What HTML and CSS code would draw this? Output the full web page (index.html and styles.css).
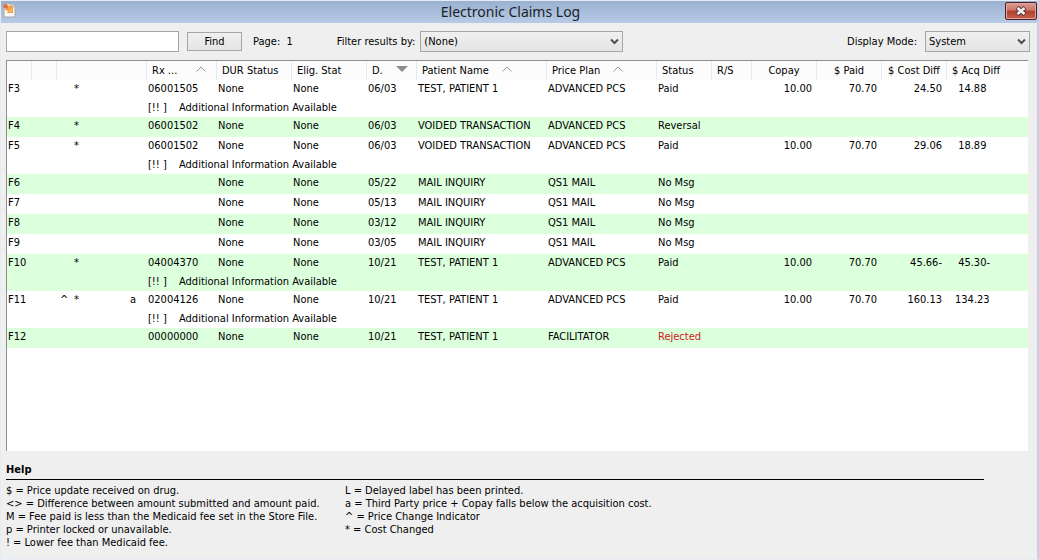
FILE: index.html
```html
<!DOCTYPE html>
<html lang="en">
<head>
<meta charset="utf-8">
<title>Electronic Claims Log</title>
<link rel="stylesheet" href="styles.css">
</head>
<body>
<div class="window">
  <header class="titlebar">
    <svg class="app-icon" width="13" height="15" viewBox="0 0 13 15" aria-hidden="true">
      <path d="M1 1h8l3 3v10H1z" fill="#fbf8f6" stroke="#a9a5a8"/>
      <path d="M9 1v3h3" fill="#e4e0e0" stroke="#b9b4b6"/>
      <path d="M0 2l3-1 2 2 3-1 2 2v6H4l1-2-3-1 1-2z" fill="#f2a04a"/>
      <path d="M0 2l3-1 2 2-1 3-3-1z" fill="#dc6e3c"/>
      <path d="M5 9l4-4v4z" fill="#f6bc55"/>
    </svg>
    <h1 class="title">Electronic Claims Log</h1>
    <button class="close" type="button" aria-label="Close">
      <svg width="12" height="10" viewBox="0 0 12 10" aria-hidden="true">
        <path d="M2 1.500l8 7M10 1.500l-8 7" stroke="#5a3c40" stroke-width="4.500"/>
        <path d="M2.500 2l7 6M9.500 2l-7 6" stroke="#f4f0f0" stroke-width="2.500"/>
      </svg>
    </button>
  </header>

  <form class="toolbar">
    <input class="search" type="text" aria-label="Search claims">
    <button class="find" type="button">Find</button>
    <span class="page">Page:&nbsp; 1</span>
    <label class="filter-label" for="filter">Filter results by:</label>
    <span class="select filter">
      <select id="filter"><option>(None)</option></select>
      <svg width="9" height="7" viewBox="0 0 9 7" aria-hidden="true"><path d="M1 1.500l3.500 3.500L8 1.500" fill="none" stroke="#505050" stroke-width="2"/></svg>
    </span>
    <label class="mode-label" for="mode">Display Mode:</label>
    <span class="select mode">
      <select id="mode"><option>System</option></select>
      <svg width="9" height="7" viewBox="0 0 9 7" aria-hidden="true"><path d="M1 1.500l3.500 3.500L8 1.500" fill="none" stroke="#505050" stroke-width="2"/></svg>
    </span>
  </form>

  <main class="list">
    <table class="claims">
      <colgroup>
        <col class="c-key"><col class="c-blank"><col class="c-flags"><col class="c-rx"><col class="c-dur"><col class="c-dur"><col class="c-date"><col class="c-name"><col class="c-plan"><col class="c-status"><col class="c-rs"><col class="c-money"><col class="c-money"><col class="c-money"><col>
      </colgroup>
      <thead>
        <tr>
          <th></th><th></th><th></th>
          <th>Rx ...<svg class="caret wide" width="10" height="6" viewBox="0 0 10 6"><path d="M.5 5.500L5 1l4.500 4.500" fill="none" stroke="#999"/></svg></th>
          <th>DUR Status</th>
          <th>Elig. Stat</th>
          <th>D.<svg class="caret" width="12" height="6" viewBox="0 0 12 6"><path d="M0 0h12L6 6z" fill="#8c8c8c"/></svg></th>
          <th>Patient Name<svg class="caret" width="10" height="6" viewBox="0 0 10 6"><path d="M.5 5.500L5 1l4.500 4.500" fill="none" stroke="#999"/></svg></th>
          <th>Price Plan<svg class="caret" width="10" height="6" viewBox="0 0 10 6"><path d="M.5 5.500L5 1l4.500 4.500" fill="none" stroke="#999"/></svg></th>
          <th>Status</th>
          <th>R/S</th>
          <th class="mid">Copay</th>
          <th class="mid">$ Paid</th>
          <th class="mid">$ Cost Diff</th>
          <th>$ Acq Diff</th>
        </tr>
      </thead>
      <tbody>
        <tr><td>F3</td><td></td><td><div class="flags"><i></i><i>*</i></div></td><td>06001505</td><td>None</td><td>None</td><td>06/03</td><td>TEST, PATIENT 1</td><td>ADVANCED PCS</td><td>Paid</td><td></td><td class="num">10.00</td><td class="num">70.70</td><td class="num">24.50</td><td class="acq">&nbsp;14.88</td></tr>
        <tr class="note"><td colspan="3"></td><td colspan="12"><span class="mark">[!! ]</span>Additional Information Available</td></tr>
      </tbody>
      <tbody>
        <tr><td>F4</td><td></td><td><div class="flags"><i></i><i>*</i></div></td><td>06001502</td><td>None</td><td>None</td><td>06/03</td><td>VOIDED TRANSACTION</td><td>ADVANCED PCS</td><td>Reversal</td><td></td><td></td><td></td><td></td><td></td></tr>
      </tbody>
      <tbody>
        <tr><td>F5</td><td></td><td><div class="flags"><i></i><i>*</i></div></td><td>06001502</td><td>None</td><td>None</td><td>06/03</td><td>VOIDED TRANSACTION</td><td>ADVANCED PCS</td><td>Paid</td><td></td><td class="num">10.00</td><td class="num">70.70</td><td class="num">29.06</td><td class="acq">&nbsp;18.89</td></tr>
        <tr class="note"><td colspan="3"></td><td colspan="12"><span class="mark">[!! ]</span>Additional Information Available</td></tr>
      </tbody>
      <tbody>
        <tr><td>F6</td><td></td><td></td><td></td><td>None</td><td>None</td><td>05/22</td><td>MAIL INQUIRY</td><td>QS1 MAIL</td><td>No Msg</td><td></td><td></td><td></td><td></td><td></td></tr>
      </tbody>
      <tbody>
        <tr><td>F7</td><td></td><td></td><td></td><td>None</td><td>None</td><td>05/13</td><td>MAIL INQUIRY</td><td>QS1 MAIL</td><td>No Msg</td><td></td><td></td><td></td><td></td><td></td></tr>
      </tbody>
      <tbody>
        <tr><td>F8</td><td></td><td></td><td></td><td>None</td><td>None</td><td>03/12</td><td>MAIL INQUIRY</td><td>QS1 MAIL</td><td>No Msg</td><td></td><td></td><td></td><td></td><td></td></tr>
      </tbody>
      <tbody>
        <tr><td>F9</td><td></td><td></td><td></td><td>None</td><td>None</td><td>03/05</td><td>MAIL INQUIRY</td><td>QS1 MAIL</td><td>No Msg</td><td></td><td></td><td></td><td></td><td></td></tr>
      </tbody>
      <tbody>
        <tr><td>F10</td><td></td><td><div class="flags"><i></i><i>*</i></div></td><td>04004370</td><td>None</td><td>None</td><td>10/21</td><td>TEST, PATIENT 1</td><td>ADVANCED PCS</td><td>Paid</td><td></td><td class="num">10.00</td><td class="num">70.70</td><td class="num">45.66-</td><td class="acq">&nbsp;45.30-</td></tr>
        <tr class="note"><td colspan="3"></td><td colspan="12"><span class="mark">[!! ]</span>Additional Information Available</td></tr>
      </tbody>
      <tbody>
        <tr><td>F11</td><td></td><td><div class="flags"><i>^</i><i>*</i><i></i><i></i><i></i><i>a</i></div></td><td>02004126</td><td>None</td><td>None</td><td>10/21</td><td>TEST, PATIENT 1</td><td>ADVANCED PCS</td><td>Paid</td><td></td><td class="num">10.00</td><td class="num">70.70</td><td class="num">160.13</td><td class="acq">134.23</td></tr>
        <tr class="note"><td colspan="3"></td><td colspan="12"><span class="mark">[!! ]</span>Additional Information Available</td></tr>
      </tbody>
      <tbody>
        <tr><td>F12</td><td></td><td></td><td>00000000</td><td>None</td><td>None</td><td>10/21</td><td>TEST, PATIENT 1</td><td>FACILITATOR</td><td class="rejected">Rejected</td><td></td><td></td><td></td><td></td><td></td></tr>
      </tbody>
    </table>
  </main>

  <section class="help">
    <h2>Help</h2>
    <div class="legend">
      <ul>
        <li>$ = Price update received on drug.</li>
        <li>&lt;&gt; = Difference between amount submitted and amount paid.</li>
        <li>M = Fee paid is less than the Medicaid fee set in the Store File.</li>
        <li>p = Printer locked or unavailable.</li>
        <li>! = Lower fee than Medicaid fee.</li>
      </ul>
      <ul>
        <li>L = Delayed label has been printed.</li>
        <li>a = Third Party price + Copay falls below the acquisition cost.</li>
        <li>^ = Price Change Indicator</li>
        <li>* = Cost Changed</li>
      </ul>
    </div>
  </section>
</div>
</body>
</html>
```
FILE: styles.css
```css
* { box-sizing: border-box; }

body {
  margin: 0;
  background: #efefef;
  color: #000;
  font: 11px/13px Tahoma, "DejaVu Sans Condensed", "DejaVu Sans", sans-serif;
}

.window {
  display: flex;
  flex-direction: column;
  min-height: 100vh;
  border: 1px solid #e4ecf6;
  border-right: 2px solid #c3d2e8;
}

input, button, select { font: inherit; color: inherit; margin: 0; }

.titlebar {
  display: flex;
  align-items: flex-start;
  height: 22px;
  padding: 1px 0 0 2px;
  background: linear-gradient(#9ab0d0, #b7cbe7);
}

.app-icon { margin-top: 1px; }

.title {
  flex: 1;
  margin: 0;
  text-align: center;
  font: 14px/20px "Noto Sans", sans-serif;
  color: #1c1f26;
}

.close {
  display: flex;
  align-items: center;
  justify-content: center;
  width: 32px;
  height: 18px;
  padding: 0;
  border: 1px solid #4c2028;
  border-radius: 2px;
  background: linear-gradient(#dc9c90, #cc7568 45%, #b0402c 50%, #c8604c);
  box-shadow: inset 0 0 0 1px #e0a59c;
}

.toolbar {
  display: flex;
  align-items: center;
  height: 37px;
  padding: 0 7px 0 5px;
}

.search {
  width: 173px;
  height: 21px;
  padding: 0 4px;
  border: 1px solid #a6a6a6;
  background: #fff;
}

.find {
  width: 55px;
  height: 19px;
  margin-left: 8px;
  padding: 0;
  border: 1px solid #a6a6a6;
  background: linear-gradient(#f0f0f0, #e4e4e4);
}

.page { margin-left: 11px; }
.filter-label { margin-left: 44px; }
.mode-label { margin-left: auto; }

.select { position: relative; height: 21px; }
.filter { width: 203px; margin-left: 5px; }
.mode { width: 105px; margin-left: 8px; }

.select select {
  width: 100%;
  height: 100%;
  padding: 0 16px 0 3px;
  border: 1px solid #a6a6a6;
  border-radius: 0;
  appearance: none;
  background: linear-gradient(#f0f0f0, #e4e4e4);
}

.select svg {
  position: absolute;
  right: 4px;
  top: 7px;
  pointer-events: none;
}

.list {
  flex: 1;
  margin: 0 9px 0 5px;
  border-top: 1px solid #8e8e8e;
  border-left: 1px solid #8e8e8e;
  background: #fff;
}

.claims {
  width: 100%;
  table-layout: fixed;
  border-collapse: separate;
  border-spacing: 0;
}

.c-key, .c-blank { width: 25px; }
.c-flags { width: 90px; }
.c-rx { width: 70px; }
.c-dur { width: 75px; }
.c-date { width: 50px; }
.c-name { width: 130px; }
.c-plan { width: 110px; }
.c-status { width: 55px; }
.c-rs { width: 40px; }
.c-money { width: 65px; }

.claims th {
  height: 19px;
  padding: 0 0 0 5px;
  border-right: 1px solid #e3ebf6;
  background: #fcfcfc;
  font-weight: normal;
  text-align: left;
  white-space: nowrap;
}

.claims th:last-child { border-right: 0; }
.claims th.mid { padding: 0; text-align: center; }

.caret { margin-left: 13px; vertical-align: 2px; }
.caret.wide { margin-left: 19px; }

.claims td {
  padding: 0 0 3px 1px;
  line-height: 17px;
  white-space: nowrap;
}

.claims .note td { padding-bottom: 2px; line-height: 15px; }
.claims td.num { padding-right: 5px; text-align: right; }
.claims td.acq { padding-left: 8px; }
.claims td.rejected { color: #d01818; }

.claims tbody:nth-of-type(even) { background: #dcffdc; }

.flags {
  display: grid;
  grid-template-columns: repeat(6, 14px);
  padding-left: 2px;
}
.flags i { font-style: normal; }

.mark { display: inline-block; width: 31px; }

.help { padding: 12px 5px 10px; }

.help h2 {
  margin: 0 48px 4px 0;
  padding-bottom: 3px;
  border-bottom: 1px solid #000;
  font-size: 11px;
  line-height: 13px;
}

.legend { display: grid; grid-template-columns: 339px 1fr; }
.legend ul { margin: 0; padding: 0; list-style: none; }
```
